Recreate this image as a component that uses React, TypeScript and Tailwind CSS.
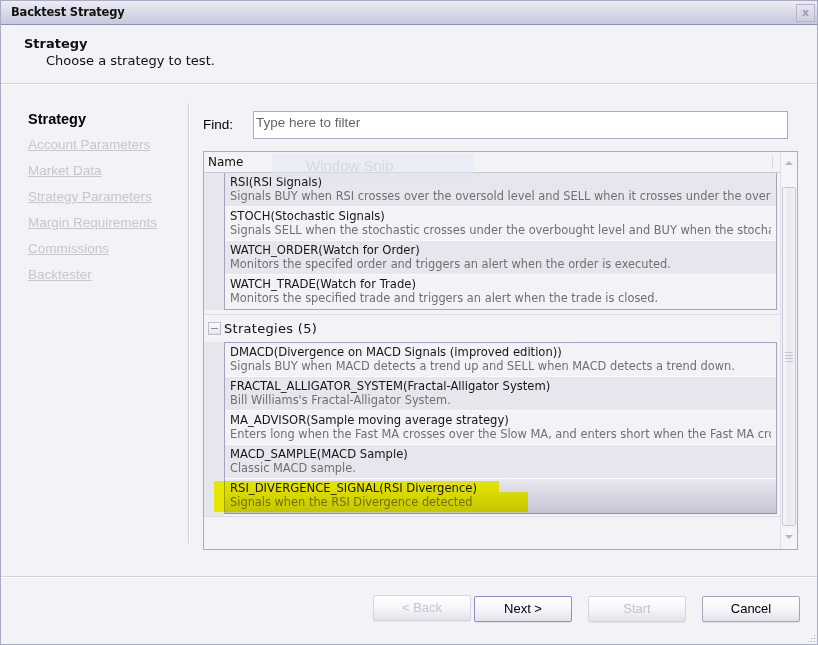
import React from 'react';

const dv = "font-['DejaVu_Sans',Verdana,sans-serif]";
const ls = "font-['Liberation_Sans',Arial,sans-serif]";

const installed = [
  { title: 'RSI(RSI Signals)', desc: 'Signals BUY when RSI crosses over the oversold level and SELL when it crosses under the overbought level.', shade: true },
  { title: 'STOCH(Stochastic Signals)', desc: 'Signals SELL when the stochastic crosses under the overbought level and BUY when the stochastic crosses over the oversold level.', shade: false },
  { title: 'WATCH_ORDER(Watch for Order)', desc: 'Monitors the specifed order and triggers an alert when the order is executed.', shade: true },
  { title: 'WATCH_TRADE(Watch for Trade)', desc: 'Monitors the specified trade and triggers an alert when the trade is closed.', shade: false },
];

const strategies = [
  { title: 'DMACD(Divergence on MACD Signals (improved edition))', desc: 'Signals BUY when MACD detects a trend up and SELL when MACD detects a trend down.', shade: false },
  { title: 'FRACTAL_ALLIGATOR_SYSTEM(Fractal-Alligator System)', desc: "Bill Williams's Fractal-Alligator System.", shade: true },
  { title: 'MA_ADVISOR(Sample moving average strategy)', desc: 'Enters long when the Fast MA crosses over the Slow MA, and enters short when the Fast MA crosses under the Slow MA.', shade: false },
  { title: 'MACD_SAMPLE(MACD Sample)', desc: 'Classic MACD sample.', shade: true },
];

const steps = ['Account Parameters', 'Market Data', 'Strategy Parameters', 'Margin Requirements', 'Commissions', 'Backtester'];

function Row({ title, desc, shade, selected, last }: { title: string; desc: string; shade?: boolean; selected?: boolean; last?: boolean }) {
  const bg = selected
    ? 'bg-linear-to-b from-[#e8e8f0] to-[#c4c4d4]'
    : shade
    ? 'bg-[#e6e6ee]'
    : 'bg-[#f2f2f7]';
  return (
    <div className={`h-[34px] px-[5px] pt-[2px] ${bg} ${last ? '' : 'border-b border-[#fbfbfd]'}`}>
      <div className={`overflow-hidden whitespace-nowrap ${dv} leading-[14px]`}>
        <div className="text-[11.6px] text-[#161616]">{title}</div>
        <div className="text-[11.4px] text-[#707070]">{desc}</div>
      </div>
    </div>
  );
}

function Button({ label, disabled, primary }: { label: string; disabled?: boolean; primary?: boolean }) {
  const border = disabled ? 'border-[#d6d6e0]' : primary ? 'border-[#8e8ecc]' : 'border-[#a4a4bc]';
  return (
    <button
      className={`w-[98px] h-[26px] rounded-[2px] border ${border} bg-linear-to-b from-[#ffffff] via-[#f6f6fa] to-[#e2e2ec] ${ls} text-[13px] ${disabled ? 'text-[#c4c4cc]' : 'text-black'} shadow-[0_1px_0_rgba(0,0,0,0.06)]`}
    >
      {label}
    </button>
  );
}

export default function App() {
  return (
    <div className="relative w-[818px] h-[645px] flex flex-col bg-[#f2f2f7] border border-[#a9aac4] overflow-hidden">
      {/* title bar */}
      <div className="h-[24px] flex items-center justify-between border-b border-[#9092b0] bg-linear-to-b from-[#ececf3] to-[#c6c8dc]">
        <span className={`pl-[10px] ${dv} font-bold text-[11.5px] text-[#111] tracking-[-0.2px]`}>Backtest Strategy</span>
        <div className="mr-[2px] w-[19px] h-[18px] border border-[#b4b4ca] flex items-center justify-center bg-linear-to-b from-[#e6e6ee] to-[#d0d0de]">
          <span className={`${dv} font-bold text-[11px] leading-none text-[#9a9ab4]`}>x</span>
        </div>
      </div>

      {/* header */}
      <div className={`h-[58px] pt-[10px] pl-[23px] ${dv}`}>
        <div className="font-bold text-[13px] leading-[17px] text-[#111]">Strategy</div>
        <div className="ml-[22px] text-[13px] leading-[17px] text-[#111]">Choose a strategy to test.</div>
      </div>
      <div className="h-[2px] border-t border-[#d2d2dc] bg-white" />

      {/* body */}
      <div className="flex-1 flex min-h-0">
        <div className={`w-[187px] pt-[21px] pl-[27px] ${ls}`}>
          <div className="font-bold text-[14.5px] leading-[26px] text-black">Strategy</div>
          {steps.map((s) => (
            <div key={s} className="text-[13.5px] leading-[26px] text-[#c6c6ce] underline decoration-[#c6c6ce]">
              {s}
            </div>
          ))}
        </div>
        <div className="mt-[18px] h-[440px] w-[2px] border-l border-[#d4d4dc] bg-white" />

        <div className="pl-[13px] pt-[26px]">
          <div className="flex items-center">
            <span className={`w-[50px] ${ls} text-[13.5px] text-black`}>Find:</span>
            <div className={`w-[535px] h-[28px] border border-[#a9aac4] bg-white pl-[2px] pt-[2px] ${ls} text-[13.5px] leading-[17px] text-[#666]`}>
              Type here to filter
            </div>
          </div>

          <div className="relative mt-[12px] w-[595px] h-[399px] border border-[#a9aac4] flex">
            <div className="flex-1 min-w-0 flex flex-col">
              {/* column header */}
              <div className="h-[21px] flex items-center border-b border-[#c9c9d6] pl-[4px] relative">
                <span className={`${dv} text-[12px] text-[#111]`}>Name</span>
                <div className="absolute right-[7px] top-[4px] h-[13px] w-px bg-[#d6d6e0]" />
              </div>

              {/* installed group (scrolled) */}
              <div className="flex pr-[3px]">
                <div className="w-[20px] shrink-0 bg-[#e6e6ee]" />
                <div className="flex-1 min-w-0 border-l border-r border-b border-[#a3a3be]">
                  {installed.map((r, i) => (
                    <Row key={r.title} {...r} last={i === installed.length - 1} />
                  ))}
                </div>
              </div>
              <div className="h-[4px]" />
              <div className="h-px bg-[#dcdce4]" />

              {/* strategies group */}
              <div className="h-[27px] flex items-center pl-[4px]">
                <div className="w-[13px] h-[13px] border border-[#bcbccc] bg-linear-to-b from-[#fbfbfd] to-[#e6e6ee] flex items-center justify-center">
                  <div className="w-[7px] h-px bg-[#8a8aa0]" />
                </div>
                <span className={`ml-[3px] ${dv} text-[13px] tracking-[0.3px] text-[#111]`}>Strategies (5)</span>
              </div>
              <div className="flex pr-[3px]">
                <div className="w-[20px] shrink-0 bg-[#e6e6ee]" />
                <div className="flex-1 min-w-0 border border-[#a3a3be] border-b-[#8e8eaa]">
                  {strategies.map((r) => (
                    <Row key={r.title} {...r} />
                  ))}
                  <Row
                    title="RSI_DIVERGENCE_SIGNAL(RSI Divergence)"
                    desc="Signals when the RSI Divergence detected"
                    selected
                    last
                  />
                </div>
              </div>
              <div className="h-[2px] w-[20px] bg-[#e6e6ee]" />
              <div className="h-px bg-[#dcdce4]" />
            </div>

            {/* scrollbar */}
            <div className="w-[17px] shrink-0 flex flex-col items-center border-l border-[#e0e0e8] bg-[#f5f5f9]">
              <div className="h-[35px] pt-[9px]">
                <div className="w-0 h-0 border-x-[4px] border-x-transparent border-b-[4px] border-b-[#b8b8c8]" />
              </div>
              <div className="w-[14px] h-[339px] rounded-[2px] border border-[#c6c6d6] bg-linear-to-r from-[#f8f8fb] via-[#e8e8f0] to-[#f2f2f7] flex flex-col items-center justify-center gap-[2px]">
                <div className="w-[8px] h-px bg-[#c4c4d8]" />
                <div className="w-[8px] h-px bg-[#c4c4d8]" />
                <div className="w-[8px] h-px bg-[#c4c4d8]" />
                <div className="w-[8px] h-px bg-[#c4c4d8]" />
              </div>
              <div className="pt-[9px]">
                <div className="w-0 h-0 border-x-[4px] border-x-transparent border-t-[4px] border-t-[#b8b8c8]" />
              </div>
            </div>

            {/* window snip ghost */}
            <div className="absolute left-[68px] top-[2px] w-[202px] h-[24px] bg-[#dfe6f4]/40 flex items-center pl-[34px]">
              <span className={`${ls} text-[15px] text-[#d6d8e0]`}>Window Snip</span>
            </div>

            {/* highlighter marks */}
            <div className="absolute left-[10px] top-[329px] w-[285px] h-[12px] bg-[#ffff00] mix-blend-multiply" />
            <div className="absolute left-[10px] top-[340px] w-[314px] h-[20px] bg-[#ffff00] mix-blend-multiply" />
          </div>
        </div>
      </div>

      {/* footer */}
      <div className="h-[2px] border-t border-[#d2d2dc] bg-white" />
      <div className="h-[66px] pt-[17px] pr-[17px] flex justify-end items-start">
        <Button label="< Back" disabled />
        <div className="ml-[3px]"><Button label="Next >" primary /></div>
        <div className="ml-[16px]"><Button label="Start" disabled /></div>
        <div className="ml-[16px]"><Button label="Cancel" /></div>
      </div>

      <svg className="absolute right-[1px] bottom-[1px]" width="10" height="10" viewBox="0 0 10 10">
        {[[8, 2], [8, 5], [5, 5], [8, 8], [5, 8], [2, 8]].map(([x, y]) => (
          <rect key={`${x}-${y}`} x={x} y={y} width="1" height="1" fill="#a8a8bc" />
        ))}
      </svg>
    </div>
  );
}
